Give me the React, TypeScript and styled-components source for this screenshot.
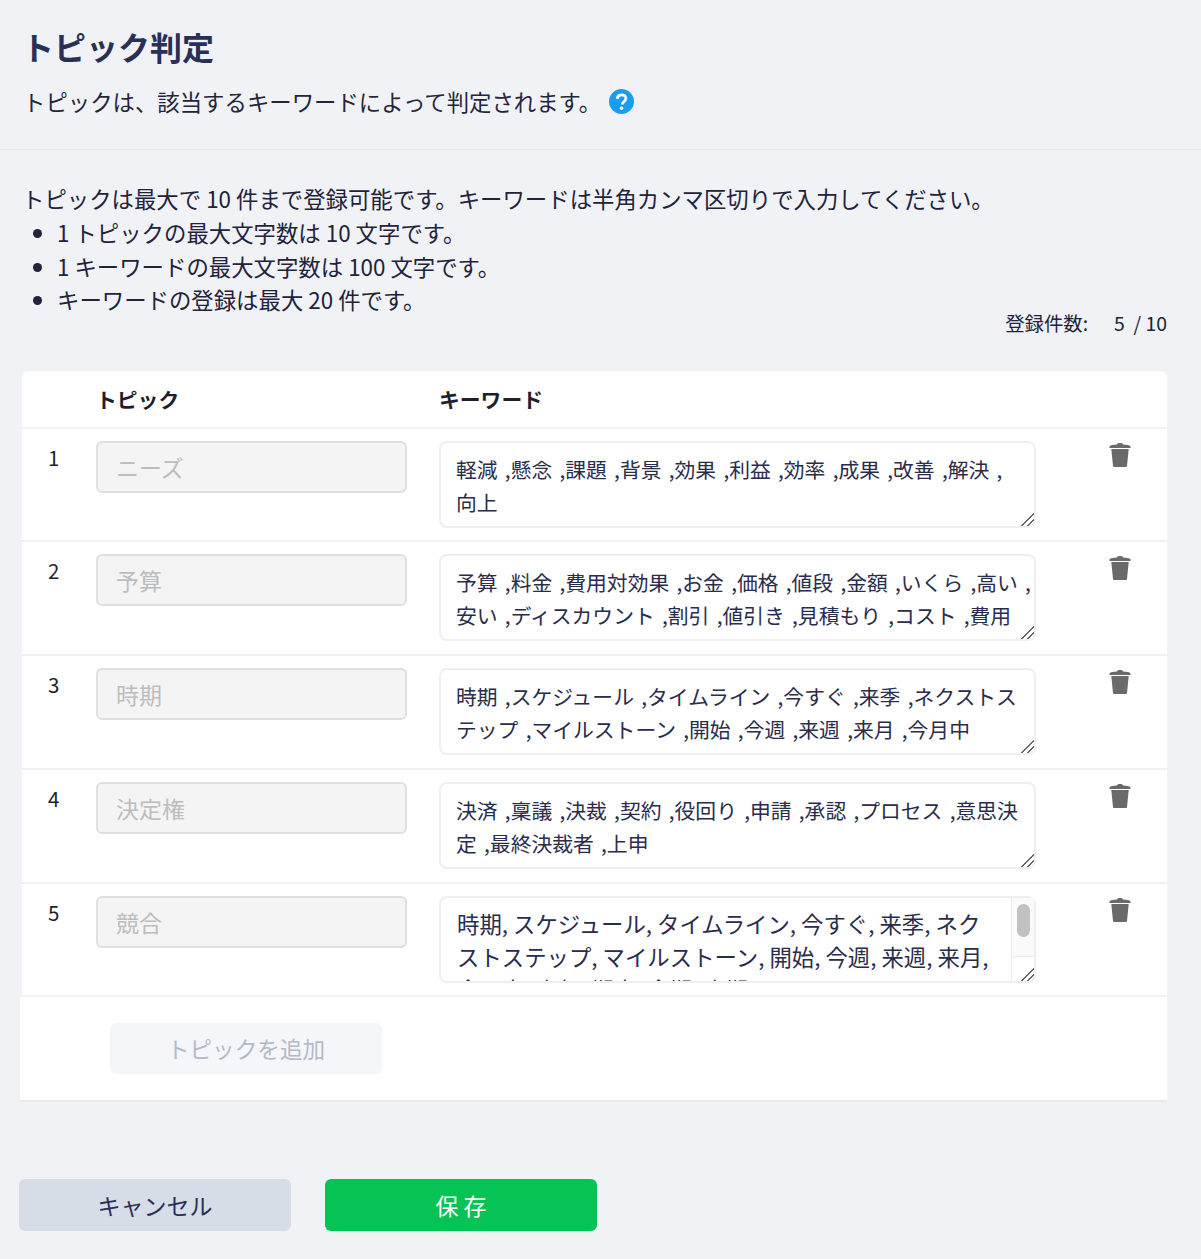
import { createGlobalStyle, styled } from 'styled-components'

const topics = [
  { name: 'ニーズ', keywords: '軽減 ,懸念 ,課題 ,背景 ,効果 ,利益 ,効率 ,成果 ,改善 ,解決 ,\n向上' },
  {
    name: '予算',
    keywords: '予算 ,料金 ,費用対効果 ,お金 ,価格 ,値段 ,金額 ,いくら ,高い ,\n安い ,ディスカウント ,割引 ,値引き ,見積もり ,コスト ,費用',
  },
  {
    name: '時期',
    keywords: '時期 ,スケジュール ,タイムライン ,今すぐ ,来季 ,ネクストス\nテップ ,マイルストーン ,開始 ,今週 ,来週 ,来月 ,今月中',
  },
  {
    name: '決定権',
    keywords: '決済 ,稟議 ,決裁 ,契約 ,役回り ,申請 ,承認 ,プロセス ,意思決\n定 ,最終決裁者 ,上申',
  },
  {
    name: '競合',
    keywords: '時期, スケジュール, タイムライン, 今すぐ, 来季, ネクストステップ, マイルストーン, 開始, 今週, 来週, 来月, 今月中, 来年, 期末, 今期, 来期',
    scroll: true,
  },
]

const App = () => {
  return (
    <>
      <GlobalStyle />
      <Header>
        <Title>トピック判定</Title>
        <SubTitle>
          トピックは、該当するキーワードによって判定されます。
          <HelpIcon viewBox="0 0 26 26" aria-hidden="true">
            <circle cx="13" cy="13" r="13" fill="#1a9cf5" />
            <path
              d="M8.600 10.200c.2-2.600 2-4 4.500-4 2.600 0 4.400 1.500 4.400 3.700 0 1.700-.9 2.600-2.100 3.500-1 .7-1.400 1.200-1.400 2.300v.5"
              fill="none"
              stroke="#fff"
              strokeWidth="2.800"
            />
            <circle cx="13" cy="20" r="1.800" fill="#fff" />
          </HelpIcon>
        </SubTitle>
      </Header>
      <Main>
        <Note>トピックは最大で 10 件まで登録可能です。キーワードは半角カンマ区切りで入力してください。</Note>
        <RuleList>
          <li>1 トピックの最大文字数は 10 文字です。</li>
          <li>1 キーワードの最大文字数は 100 文字です。</li>
          <li>キーワードの登録は最大 20 件です。</li>
        </RuleList>
        <CountRow>
          <span>登録件数:</span>
          <CountValue>5 &nbsp;/ 10</CountValue>
        </CountRow>
        <Card>
          <HeadRow>
            <span />
            <HeadCell>トピック</HeadCell>
            <HeadCell>キーワード</HeadCell>
          </HeadRow>
          {topics.map((topic, index) => (
            <TopicRow key={topic.name}>
              <RowNumber>{index + 1}</RowNumber>
              <TopicInput disabled placeholder={topic.name} />
              <KeywordBox>
                <KeywordArea defaultValue={topic.keywords} $scroll={!!topic.scroll} />
                {topic.scroll && (
                  <ScrollBar>
                    <ScrollTrack>
                      <ScrollThumb />
                    </ScrollTrack>
                    <ScrollCorner />
                  </ScrollBar>
                )}
              </KeywordBox>
              <TrashButton aria-label="削除">
                <svg width="22" height="26" viewBox="0 0 22 26">
                  <path
                    d="M8 2.500C8 1.500 9 1 11 1s3 .5 3 1.500c3.500.2 6.500.8 7.500 1.700V6H.5V4.200C1.500 3.300 4.500 2.700 8 2.500Z"
                    fill="#6a6a6a"
                  />
                  <path d="M2.300 7h17.400l-1.700 17c-.1.800-.5 1-1.200 1H5.200c-.7 0-1.100-.2-1.200-1Z" fill="#6a6a6a" />
                </svg>
              </TrashButton>
            </TopicRow>
          ))}
        </Card>
        <AddCard>
          <AddButton disabled>トピックを追加</AddButton>
        </AddCard>
        <Actions>
          <CancelButton>キャンセル</CancelButton>
          <SaveButton>保 存</SaveButton>
        </Actions>
      </Main>
    </>
  )
}

const GlobalStyle = createGlobalStyle`
  * {
    box-sizing: border-box;
  }

  body {
    margin: 0;
    background-color: #f0f2f6;
    color: #22223a;
    font-family: 'Noto Sans CJK JP', 'Noto Sans', sans-serif;
  }
`
const Header = styled.header`
  height: 150px;
  padding: 23px 22px 0;
  border-bottom: 1px solid #e7e8ec;
`
const Title = styled.h1`
  margin: 0;
  color: #2a2f55;
  font-size: 32px;
  line-height: 47px;
  font-weight: 700;
`
const SubTitle = styled.p`
  display: flex;
  align-items: center;
  margin: 13px 0 0 1px;
  color: #25253a;
  font-size: 22.400px;
  line-height: 36px;
`
const HelpIcon = styled.svg`
  width: 25px;
  height: 25px;
  margin-left: 8px;
`
const Main = styled.main`
  padding: 31px 34px 0 22px;
`
const Note = styled.p`
  margin: 0;
  font-size: 22.400px;
  line-height: 34px;
`
const RuleList = styled.ul`
  margin: 1px 0 0;
  padding: 0 0 0 35px;
  font-size: 22.400px;
  line-height: 33.500px;
`
const CountRow = styled.div`
  display: flex;
  justify-content: flex-end;
  gap: 26px;
  margin-top: -8px;
  font-size: 19.400px;
  line-height: 28px;
`
const CountValue = styled.span`
  white-space: pre;
`
const Card = styled.section`
  margin-top: 34px;
  border-radius: 6px 6px 0 0;
  background-color: #fff;
`
const HeadRow = styled.div`
  display: grid;
  grid-template-columns: 74px 343px 1fr;
  height: 58px;
  align-items: center;
  border-bottom: 2px solid #f0f1f4;
`
const HeadCell = styled.div`
  font-size: 20.800px;
  font-weight: 700;
  color: #1f1f2b;
`
const TopicRow = styled.div`
  display: grid;
  grid-template-columns: 74px 311px 629px 1fr;
  height: 113.800px;
  padding-top: 12px;
  border-bottom: 2px solid #f0f1f4;
`
const RowNumber = styled.div`
  padding-left: 26px;
  font-size: 20.500px;
  line-height: 32px;
  color: #1f1f2b;
`
const TopicInput = styled.input`
  width: 311px;
  height: 52px;
  padding: 0 18px;
  border: 2px solid #dedfe1;
  border-radius: 6px;
  background-color: #f4f4f5;
  font-family: inherit;
  font-size: 23px;

  &::placeholder {
    color: #bdbdbd;
  }
`
const KeywordBox = styled.div`
  position: relative;
  width: 597px;
  height: 87px;
  margin-left: 32px;
`
const KeywordArea = styled.textarea<{ $scroll: boolean }>`
  display: block;
  width: 100%;
  height: 100%;
  padding: ${({ $scroll }) => ($scroll ? '9px 36px 0 16px' : '10px 0 0 15px')};
  border: 2px solid #eeeff2;
  border-radius: 8px;
  color: #2a2c4c;
  font-family: inherit;
  font-size: ${({ $scroll }) => ($scroll ? '22.400px' : '20.800px')};
  word-spacing: ${({ $scroll }) => ($scroll ? '0' : '2.600px')};
  white-space: ${({ $scroll }) => ($scroll ? 'pre-wrap' : 'pre')};
  line-height: 33px;
  resize: vertical;
  overflow: hidden;

  &::-webkit-resizer {
    background: linear-gradient(135deg, transparent 55%, #666 55%, #666 62%, transparent 62%, transparent 75%, #666 75%, #666 82%, transparent 82%);
  }
`
const ScrollBar = styled.div`
  position: absolute;
  top: 2px;
  right: 2px;
  bottom: 2px;
  display: flex;
  flex-direction: column;
  width: 23px;
  border-left: 1px solid #ececec;
  border-radius: 0 6px 6px 0;
  pointer-events: none;
`
const ScrollTrack = styled.div`
  flex: 1;
  padding: 6px 5px;
  border-bottom: 1px solid #ececec;
  background-color: #fafafa;
`
const ScrollThumb = styled.div`
  width: 13px;
  height: 33px;
  border-radius: 7px;
  background-color: #c1c1c1;
`
const ScrollCorner = styled.div`
  height: 24px;
`
const TrashButton = styled.button`
  grid-column: 4;
  justify-self: start;
  height: 31px;
  margin-left: 73px;
  padding: 0;
  border: 0;
  background: none;
`
const AddCard = styled.section`
  margin-left: -2px;
  padding: 26px 90px;
  height: 105px;
  border-bottom: 2px solid #e8e9ed;
  background-color: #fff;
`
const AddButton = styled.button`
  display: block;
  width: 272px;
  height: 51px;
  border: 0;
  border-radius: 6px;
  background-color: #f5f6fa;
  color: #b3bac7;
  font-family: inherit;
  font-size: 22.600px;
`
const Actions = styled.div`
  display: flex;
  gap: 34px;
  margin: 77px 0 0 -3px;
`
const ActionButton = styled.button`
  width: 272px;
  height: 52px;
  border: 0;
  border-radius: 6px;
  font-family: inherit;
  font-size: 23px;
`
const CancelButton = styled(ActionButton)`
  background-color: #d6dde6;
  color: #2a2f55;
`
const SaveButton = styled(ActionButton)`
  background-color: #05c455;
  color: #fff;
`

export default App
